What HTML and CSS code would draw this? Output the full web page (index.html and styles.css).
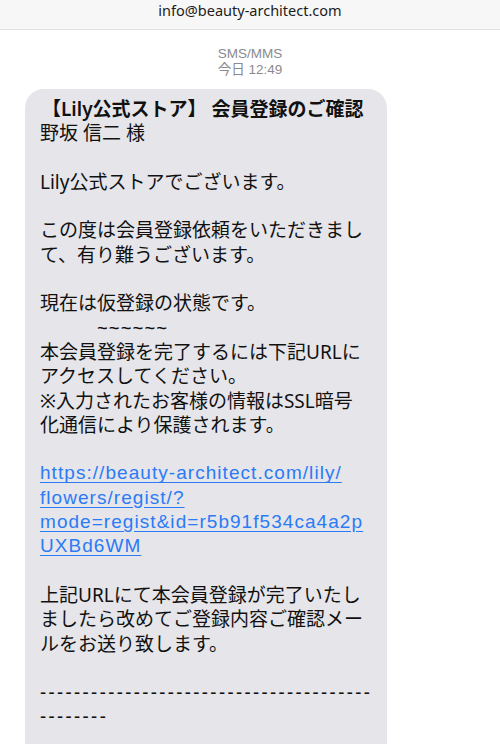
FILE: index.html
```html
<!DOCTYPE html>
<html lang="ja">
<head>
  <meta charset="UTF-8">
  <meta name="viewport" content="width=device-width, initial-scale=1.0">
  <title>SMS</title>
  <link rel="stylesheet" href="styles.css">
</head>
<body>

  <!-- Header -->
  <header class="topbar">
    <span>info@beauty-architect.com</span>
  </header>

  <!-- Thread -->
  <section class="thread">
    <div class="meta">
      <p class="kind">SMS/MMS</p>
      <p>今日 12:49</p>
    </div>

    <div class="bubble">
      <p class="title">【Lily公式ストア】 会員登録のご確認</p>
      <p>野坂 信二 様</p>
      <p class="blank"></p>
      <p>Lily公式ストアでございます。</p>
      <p class="blank"></p>
      <p>この度は会員登録依頼をいただきまし</p>
      <p>て、有り難うございます。</p>
      <p class="blank"></p>
      <p>現在は仮登録の状態です。</p>
      <p class="tilde">~~~~~~</p>
      <p>本会員登録を完了するには下記URLに</p>
      <p>アクセスしてください。</p>
      <p>※入力されたお客様の情報はSSL暗号</p>
      <p>化通信により保護されます。</p>
      <p class="blank"></p>
      <a class="link" href="#">https://beauty-architect.com/lily/<br>flowers/regist/?<br>mode=regist&amp;id=r5b91f534ca4a2p<br>UXBd6WM</a>
      <p class="blank"></p>
      <p>上記URLにて本会員登録が完了いたし</p>
      <p>ましたら改めてご登録内容ご確認メー</p>
      <p>ルをお送り致します。</p>
      <p class="blank"></p>
      <p class="dash">---------------------------------------</p>
      <p class="dash">--------</p>
    </div>
  </section>

</body>
</html>
```

FILE: styles.css
```css
* {
  margin: 0;
  padding: 0;
  box-sizing: border-box;
}

body {
  font-family: "Liberation Sans", "Noto Sans CJK JP", sans-serif;
  background-color: #ffffff;
  color: #111111;
  width: 500px;
  height: 744px;
  overflow: hidden;
}

/* Header */
.topbar {
  height: 30px;
  background-color: #f7f7f7;
  border-bottom: 1px solid #e2e2e2;
  display: flex;
  justify-content: center;
  align-items: center;
  font-family: "Noto Sans", "Noto Sans CJK JP", sans-serif;
  font-size: 14.5px;
  color: #1c1c1c;
  padding-bottom: 9px;
}

/* Thread */
.thread {
  padding: 16px 0 0 25px;
}

.meta {
  width: 450px;
  text-align: center;
  font-family: "Liberation Sans", "Noto Sans CJK JP", sans-serif;
  font-size: 13.5px;
  line-height: 16px;
  color: #8a8a8e;
  margin-bottom: 11px;
}

.bubble {
  width: 362px;
  background-color: #e5e5ea;
  border-radius: 19px 19px 0 0;
  padding: 8px 0 15px 15px;
  font-family: "Noto Sans", "Noto Sans CJK JP", sans-serif;
  font-size: 19px;
  line-height: 24.3px;
  color: #111111;
  white-space: nowrap;
}

.bubble p {
  height: 24.3px;
}

.bubble .title {
  font-weight: 600;
  padding-left: 2px;
}

.bubble .tilde {
  padding-left: 57px;
  letter-spacing: 1px;
}

.bubble .dash {
  letter-spacing: 2.4px;
}

.link {
  display: block;
  font-family: "Liberation Sans", sans-serif;
  letter-spacing: 1.05px;
  color: #2b7bf5;
  text-decoration: underline;
  text-underline-offset: 3px;
}
```
